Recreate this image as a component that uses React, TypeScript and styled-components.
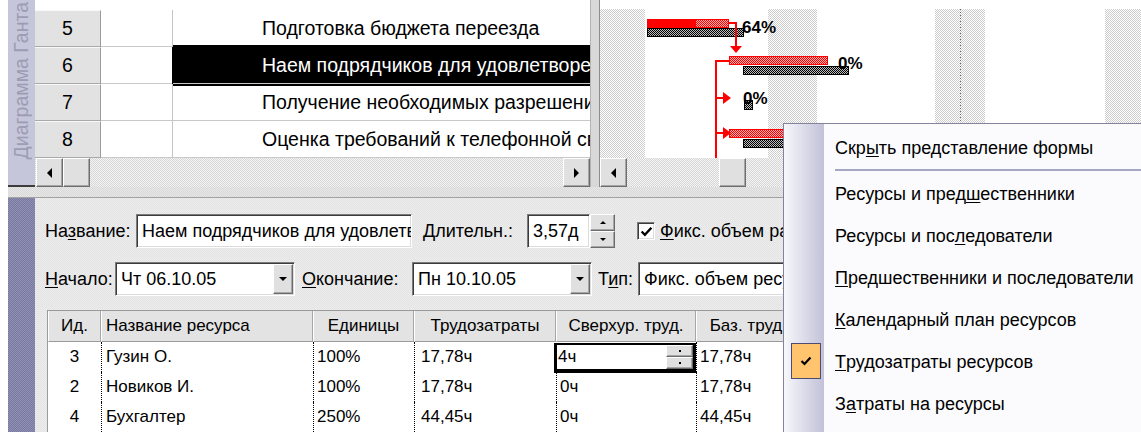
import React from "react";
import styled, { createGlobalStyle, css } from "styled-components";

const GlobalStyle = createGlobalStyle`
  *, *::before, *::after { box-sizing: border-box; }
  html, body { margin: 0; padding: 0; background: #ffffff; }
  body {
    overflow: hidden;
    font-family: "Liberation Sans", Arial, sans-serif;
    color: #000;
  }
  u { text-decoration-thickness: 1px; text-underline-offset: 2px; }
`;

const dither = (a: string, b: string) => css`
  background-color: ${b};
  background-image: repeating-conic-gradient(${a} 0 25%, ${b} 0 50%);
  background-size: 2px 2px;
`;

const raised = css`
  background: #e0e0e0;
  border: 1px solid;
  border-color: #ffffff #6c6c6c #6c6c6c #ffffff;
  box-shadow: inset -1px -1px 0 #a6a6a6;
`;

const sunken = css`
  background: #ffffff;
  border: 1px solid;
  border-color: #7b7b7b #ffffff #ffffff #7b7b7b;
  box-shadow: inset 1px 1px 0 #3c3c3c, inset -1px -1px 0 #dcdcdc;
`;

/* ---------- page frame ---------- */

const Frame = styled.div`
  position: relative;
  width: 1141px;
  height: 432px;
  overflow: hidden;
  padding-left: 8px;
  display: flex;
  flex-direction: column;
`;

const Upper = styled.div`
  display: flex;
  height: 187px;
  flex: none;
`;

const ViewBar = styled.div<{ $tone: "light" | "dark" }>`
  width: 27px;
  flex: none;
  overflow: hidden;
  display: flex;
  align-items: flex-end;
  justify-content: center;
  padding-bottom: 26px;
  ${(p) =>
    p.$tone === "light"
      ? css`background: #c6c6da; border-bottom: 2px solid #3c3c3c;`
      : dither("#77779f", "#9191b6")}
`;

const ViewTitle = styled.span`
  writing-mode: vertical-rl;
  transform: rotate(180deg);
  white-space: nowrap;
  font-size: 19.5px;
  color: #9c9cb4;
`;

/* ---------- task sheet (top left) ---------- */

const TaskPane = styled.div`
  width: 555px;
  flex: none;
  display: flex;
  flex-direction: column;
  background: #ffffff;
  padding-top: 10px;
`;

const TaskRow = styled.div`
  display: grid;
  grid-template-columns: 66px 72px 1fr;
  height: 37px;
  font-size: 19.5px;
`;

const RowHead = styled.div`
  background: #e2e2e2;
  border-top: 1px solid #f8f8f8;
  border-bottom: 1px solid #a9a9a9;
  border-right: 1px solid #9c9c9c;
  display: flex;
  align-items: center;
  justify-content: center;
`;

const IndicatorCell = styled.div`
  border-right: 1px solid #c4c4c4;
  border-bottom: 1px solid #c8c8c8;
`;

const NameCell = styled.div<{ $selected?: boolean }>`
  border-bottom: 1px solid #c8c8c8;
  padding-left: 89px;
  display: flex;
  align-items: center;
  white-space: nowrap;
  overflow: hidden;
  ${(p) =>
    p.$selected &&
    css`
      background: #000000;
      color: #ffffff;
      position: relative;
      z-index: 1;
      box-shadow: 0 -2px 0 #000, 0 2px 0 #000, -1px 0 0 #000;
    `}
`;

/* ---------- scroll bars ---------- */

const ScrollBar = styled.div<{ $lead?: number }>`
  height: 29px;
  flex: none;
  display: flex;
  padding-left: ${(p) => p.$lead ?? 0}px;
  ${dither("#d6d6d6", "#f4f4f4")}
`;

const ScrollButton = styled.div<{ $at?: number; $end?: boolean }>`
  ${raised}
  width: 27px;
  flex: none;
  margin-left: ${(p) => (p.$end ? "auto" : `${p.$at ?? 0}px`)};
  display: flex;
  align-items: center;
  justify-content: center;
`;

const Arrow = styled.span<{ $dir: "left" | "right" | "up" | "down"; $s?: number }>`
  width: 0;
  height: 0;
  ${(p) => {
    const s = p.$s ?? 5;
    switch (p.$dir) {
      case "left":
        return css`border-top: ${s}px solid transparent; border-bottom: ${s}px solid transparent; border-right: ${s}px solid #000;`;
      case "right":
        return css`border-top: ${s}px solid transparent; border-bottom: ${s}px solid transparent; border-left: ${s}px solid #000;`;
      case "up":
        return css`border-left: ${s}px solid transparent; border-right: ${s}px solid transparent; border-bottom: ${s}px solid #000;`;
      default:
        return css`border-left: ${s}px solid transparent; border-right: ${s}px solid transparent; border-top: ${s}px solid #000;`;
    }
  }}
`;

const PaneDivider = styled.div`
  width: 10px;
  flex: none;
  background: #d8d8d8;
  border-left: 1px solid #b4b4b4;
  border-right: 1px solid #8c8c8c;
`;

/* ---------- gantt pane ---------- */

const GanttPane = styled.div`
  flex: 1;
  min-width: 0;
  display: flex;
  flex-direction: column;
  background: #ffffff;
`;

const ChartSvg = styled.svg`
  display: block;
  flex: none;
`;

const GanttChart: React.FC = () => (
  <ChartSvg width={541} height={158} shapeRendering="crispEdges">
    <defs>
      <pattern id="nonwork" width="2" height="2" patternUnits="userSpaceOnUse">
        <rect width="2" height="2" fill="#ffffff" />
        <rect width="1" height="1" fill="#cdcdcd" />
        <rect x="1" y="1" width="1" height="1" fill="#cdcdcd" />
      </pattern>
      <pattern id="taskHatch" width="2" height="2" patternUnits="userSpaceOnUse">
        <rect width="2" height="2" fill="#ffb4b4" />
        <rect width="1" height="1" fill="#ff0000" />
        <rect x="1" y="1" width="1" height="1" fill="#ff0000" />
      </pattern>
      <pattern id="baseHatch" width="2" height="2" patternUnits="userSpaceOnUse">
        <rect width="2" height="2" fill="#bdbdbd" />
        <rect width="1" height="1" fill="#000000" />
        <rect x="1" y="1" width="1" height="1" fill="#000000" />
      </pattern>
    </defs>

    {/* non-working days */}
    <rect x="0" y="9" width="45" height="149" fill="url(#nonwork)" />
    <rect x="168" y="9" width="49" height="149" fill="url(#nonwork)" />
    <rect x="335" y="9" width="50" height="149" fill="url(#nonwork)" />
    <rect x="505" y="9" width="36" height="149" fill="url(#nonwork)" />
    <line x1="360.5" y1="9" x2="360.5" y2="158" stroke="#6a6a6a" strokeDasharray="1 2" />

    {/* task 5 */}
    <rect x="47.5" y="28.5" width="96" height="8" fill="url(#baseHatch)" stroke="#000" />
    <rect x="47.5" y="19.5" width="81" height="8" fill="url(#taskHatch)" stroke="#ff0000" />
    <rect x="47" y="19" width="49" height="9" fill="#ff0000" />

    {/* task 6 */}
    <rect x="143.5" y="66.5" width="105" height="8" fill="url(#baseHatch)" stroke="#000" />
    <rect x="129.5" y="56.5" width="98" height="8" fill="url(#taskHatch)" stroke="#ff0000" />

    {/* task 7: milestone baseline */}
    <rect x="144.5" y="100.5" width="8" height="9" fill="url(#baseHatch)" stroke="#000" />

    {/* task 8 */}
    <rect x="143.5" y="139.5" width="140" height="8" fill="url(#baseHatch)" stroke="#000" />
    <rect x="129.5" y="129.5" width="140" height="8" fill="url(#taskHatch)" stroke="#ff0000" />

    {/* links */}
    <g stroke="#ff0000" strokeWidth="2" fill="none">
      <polyline points="128,23 136,23 136,46" />
      <polyline points="129,61 116,61 116,158" />
      <line x1="116" y1="98" x2="124" y2="98" />
      <line x1="116" y1="133" x2="124" y2="133" />
    </g>
    <g fill="#ff0000" shapeRendering="geometricPrecision">
      <polygon points="130,46 142,46 136,53" />
      <polygon points="123,92 131,98 123,104" />
      <polygon points="123,127 131,133 123,139" />
    </g>

    <g fontFamily="'Liberation Sans', Arial, sans-serif" fontWeight="700" fontSize="17" fill="#000" shapeRendering="geometricPrecision">
      <text x="142" y="33">64%</text>
      <text x="238" y="69">0%</text>
      <text x="143" y="104">0%</text>
    </g>
  </ChartSvg>
);

/* ---------- splitter + task form ---------- */

const Splitter = styled.div`
  height: 11px;
  flex: none;
  ${dither("#d8d8d8", "#e8e8e8")}
  border-bottom: 1px solid #a2a2a2;
`;

const Lower = styled.div`
  flex: 1;
  display: flex;
  min-height: 0;
`;

const FormPane = styled.div`
  flex: 1;
  min-width: 0;
  ${dither("#e4e4e4", "#ececec")}
  padding: 16px 0 0 10px;
  display: flex;
  flex-direction: column;
  gap: 14px;
`;

const FieldRow = styled.div`
  display: flex;
  align-items: center;
  height: 34px;
  flex: none;
  font-size: 18px;
  white-space: nowrap;
`;

const Label = styled.span<{ $w: number; $ml?: number }>`
  width: ${(p) => p.$w}px;
  margin-left: ${(p) => p.$ml ?? 0}px;
  flex: none;
`;

const TextBox = styled.div<{ $w: number }>`
  ${sunken}
  width: ${(p) => p.$w}px;
  height: 34px;
  flex: none;
  display: flex;
  align-items: center;
  padding-left: 5px;
  overflow: hidden;
  white-space: nowrap;
`;

const BoxText = styled.span`
  flex: 1;
  overflow: hidden;
`;

const DropButton = styled.div`
  ${raised}
  width: 20px;
  height: 30px;
  margin-right: 1px;
  flex: none;
  display: flex;
  align-items: center;
  justify-content: center;
`;

const Spinner = styled.div`
  width: 25px;
  height: 34px;
  flex: none;
  display: flex;
  flex-direction: column;
`;

const SpinButton = styled.div`
  ${raised}
  flex: 1;
  display: flex;
  align-items: center;
  justify-content: center;
`;

const CheckBox = styled.div<{ $ml: number }>`
  ${sunken}
  width: 18px;
  height: 18px;
  flex: none;
  margin-left: ${(p) => p.$ml}px;
  margin-right: 5px;
  display: flex;
  align-items: center;
  justify-content: center;
`;

/* ---------- resource sheet ---------- */

const Sheet = styled.div`
  margin-left: 2px;
  display: grid;
  grid-template-columns: 53px 212px 101px 142px 140px 100px 1fr;
  grid-template-rows: 31px;
  grid-auto-rows: 30px;
  background: #ffffff;
  border-left: 1px solid #9a9a9a;
  border-top: 1px solid #9a9a9a;
  font-size: 17px;
  white-space: nowrap;
`;

const HeadCell = styled.div<{ $left?: boolean }>`
  background: #e3e3e3;
  border-left: 1px solid #ffffff;
  border-right: 1px solid #a6a6a6;
  border-bottom: 1px solid #9a9a9a;
  display: flex;
  align-items: center;
  justify-content: ${(p) => (p.$left ? "flex-start" : "center")};
  padding-left: ${(p) => (p.$left ? 4 : 0)}px;
  overflow: hidden;
`;

const Cell = styled.div<{ $center?: boolean; $dotted?: boolean; $pad?: number }>`
  display: flex;
  align-items: center;
  justify-content: ${(p) => (p.$center ? "center" : "flex-start")};
  padding-left: ${(p) => p.$pad ?? 3}px;
  ${(p) => p.$dotted && css`border-left: 1px dotted #000;`}
  overflow: hidden;
`;

const EditCell = styled.div`
  position: relative;
  z-index: 1;
  margin: 1px 0 -1px -2px;
  background: #ffffff;
  border-left: 3px solid #000;
  border-right: 3px solid #000;
  border-top: 2px solid #000;
  border-bottom: 4px solid #000;
  display: flex;
  align-items: stretch;
  padding-left: 1px;
`;

const EditText = styled.span`
  flex: 1;
  display: flex;
  align-items: center;
`;

const MiniSpin = styled.div`
  width: 27px;
  display: flex;
  flex-direction: column;
`;

const MiniSpinButton = styled.div`
  ${raised}
  flex: 1;
  display: flex;
  align-items: center;
  justify-content: center;
`;

const Dot = styled.span`
  width: 2px;
  height: 2px;
  background: #000;
`;

/* ---------- context menu ---------- */

const Menu = styled.div`
  position: absolute;
  left: 783px;
  top: 123px;
  width: 362px;
  height: 320px;
  border-left: 1px solid #8383a1;
  border-top: 1px solid #8383a1;
  background: linear-gradient(to right, #f7f7fb 0, #c2c1d8 40px, #fbfbfd 40px);
  padding-top: 3px;
  font-size: 18px;
  z-index: 5;
`;

const MenuItem = styled.div`
  position: relative;
  height: 42px;
  display: flex;
  align-items: center;
  padding-left: 51px;
  white-space: nowrap;
`;

const MenuSeparator = styled.div`
  height: 4px;
  margin-left: 51px;
  border-top: 2px solid #a7a7c3;
`;

const CheckTile = styled.div`
  position: absolute;
  left: 7px;
  top: 2px;
  width: 30px;
  height: 36px;
  background: #ffc46d;
  border: 1px solid #4c4c72;
  display: flex;
  align-items: center;
  justify-content: center;
`;

const CheckGlyph: React.FC<{ size?: number }> = ({ size = 12 }) => (
  <svg width={size} height={size} viewBox="0 0 12 12">
    <path d="M1.5 6 L4.5 9 L10.5 2.5" fill="none" stroke="#000" strokeWidth="2.2" />
  </svg>
);

/* ---------- data ---------- */

const tasks = [
  { id: 5, name: "Подготовка бюджета переезда" },
  { id: 6, name: "Наем подрядчиков для удовлетворения требований", selected: true },
  { id: 7, name: "Получение необходимых разрешений" },
  { id: 8, name: "Оценка требований к телефонной связи" },
];

const resources = [
  { id: 3, name: "Гузин О.", units: "100%", work: "17,78ч", ot: "4ч", base: "17,78ч" },
  { id: 2, name: "Новиков И.", units: "100%", work: "17,78ч", ot: "0ч", base: "17,78ч" },
  { id: 4, name: "Бухгалтер", units: "250%", work: "44,45ч", ot: "0ч", base: "44,45ч" },
];

export default function App() {
  return (
    <>
      <GlobalStyle />
      <Frame>
        <Upper>
          <ViewBar $tone="light">
            <ViewTitle>Диаграмма Ганта</ViewTitle>
          </ViewBar>

          <TaskPane>
            {tasks.map((t) => (
              <TaskRow key={t.id}>
                <RowHead>{t.id}</RowHead>
                <IndicatorCell />
                <NameCell $selected={t.selected}>{t.name}</NameCell>
              </TaskRow>
            ))}
            <ScrollBar $lead={1}>
              <ScrollButton>
                <Arrow $dir="left" />
              </ScrollButton>
              <ScrollButton />
              <ScrollButton $end>
                <Arrow $dir="right" />
              </ScrollButton>
            </ScrollBar>
          </TaskPane>

          <PaneDivider />

          <GanttPane>
            <GanttChart />
            <ScrollBar>
              <ScrollButton>
                <Arrow $dir="left" />
              </ScrollButton>
              <ScrollButton $at={92} />
            </ScrollBar>
          </GanttPane>
        </Upper>

        <Splitter />

        <Lower>
          <ViewBar $tone="dark" />
          <FormPane>
            <FieldRow>
              <Label $w={91}>
                На<u>з</u>вание:
              </Label>
              <TextBox $w={276}>
                <BoxText>Наем подрядчиков для удовлетворения требований</BoxText>
              </TextBox>
              <Label $w={104} $ml={11}>
                <u>Д</u>лительн.:
              </Label>
              <TextBox $w={63}>
                <BoxText>3,57д</BoxText>
              </TextBox>
              <Spinner>
                <SpinButton>
                  <Arrow $dir="up" $s={3} />
                </SpinButton>
                <SpinButton>
                  <Arrow $dir="down" $s={3} />
                </SpinButton>
              </Spinner>
              <CheckBox $ml={22}>
                <CheckGlyph size={13} />
              </CheckBox>
              <Label $w={200}>
                <u>Ф</u>икс. объем работ
              </Label>
            </FieldRow>

            <FieldRow>
              <Label $w={70}>
                <u>Н</u>ачало:
              </Label>
              <TextBox $w={180}>
                <BoxText>Чт 06.10.05</BoxText>
                <DropButton>
                  <Arrow $dir="down" $s={4} />
                </DropButton>
              </TextBox>
              <Label $w={110} $ml={7}>
                <u>О</u>кончание:
              </Label>
              <TextBox $w={180}>
                <BoxText>Пн 10.10.05</BoxText>
                <DropButton>
                  <Arrow $dir="down" $s={4} />
                </DropButton>
              </TextBox>
              <Label $w={40} $ml={6}>
                Т<u>и</u>п:
              </Label>
              <TextBox $w={220}>
                <BoxText>Фикс. объем ресурсов</BoxText>
              </TextBox>
            </FieldRow>

            <Sheet>
              <HeadCell>Ид.</HeadCell>
              <HeadCell $left>Название ресурса</HeadCell>
              <HeadCell>Единицы</HeadCell>
              <HeadCell>Трудозатраты</HeadCell>
              <HeadCell>Сверхур. труд.</HeadCell>
              <HeadCell>Баз. труд</HeadCell>
              <HeadCell />
              {resources.map((r, i) => (
                <React.Fragment key={r.id}>
                  <Cell $center $pad={0}>
                    {r.id}
                  </Cell>
                  <Cell $dotted $pad={4}>
                    {r.name}
                  </Cell>
                  <Cell $dotted>{r.units}</Cell>
                  <Cell $dotted $pad={6}>
                    {r.work}
                  </Cell>
                  {i === 0 ? (
                    <EditCell>
                      <EditText>{r.ot}</EditText>
                      <MiniSpin>
                        <MiniSpinButton>
                          <Dot />
                        </MiniSpinButton>
                        <MiniSpinButton>
                          <Dot />
                        </MiniSpinButton>
                      </MiniSpin>
                    </EditCell>
                  ) : (
                    <Cell $dotted>{r.ot}</Cell>
                  )}
                  <Cell $dotted>{r.base}</Cell>
                  <Cell />
                </React.Fragment>
              ))}
            </Sheet>
          </FormPane>
        </Lower>

        <Menu>
          <MenuItem>
            Скр<u>ы</u>ть представление формы
          </MenuItem>
          <MenuSeparator />
          <MenuItem>
            Ресурсы и пред<u>ш</u>ественники
          </MenuItem>
          <MenuItem>
            Ресурсы и пос<u>л</u>едователи
          </MenuItem>
          <MenuItem>
            <u>П</u>редшественники и последователи
          </MenuItem>
          <MenuItem>
            <u>К</u>алендарный план ресурсов
          </MenuItem>
          <MenuItem>
            <CheckTile>
              <CheckGlyph />
            </CheckTile>
            <u>Т</u>рудозатраты ресурсов
          </MenuItem>
          <MenuItem>
            З<u>а</u>траты на ресурсы
          </MenuItem>
        </Menu>
      </Frame>
    </>
  );
}
